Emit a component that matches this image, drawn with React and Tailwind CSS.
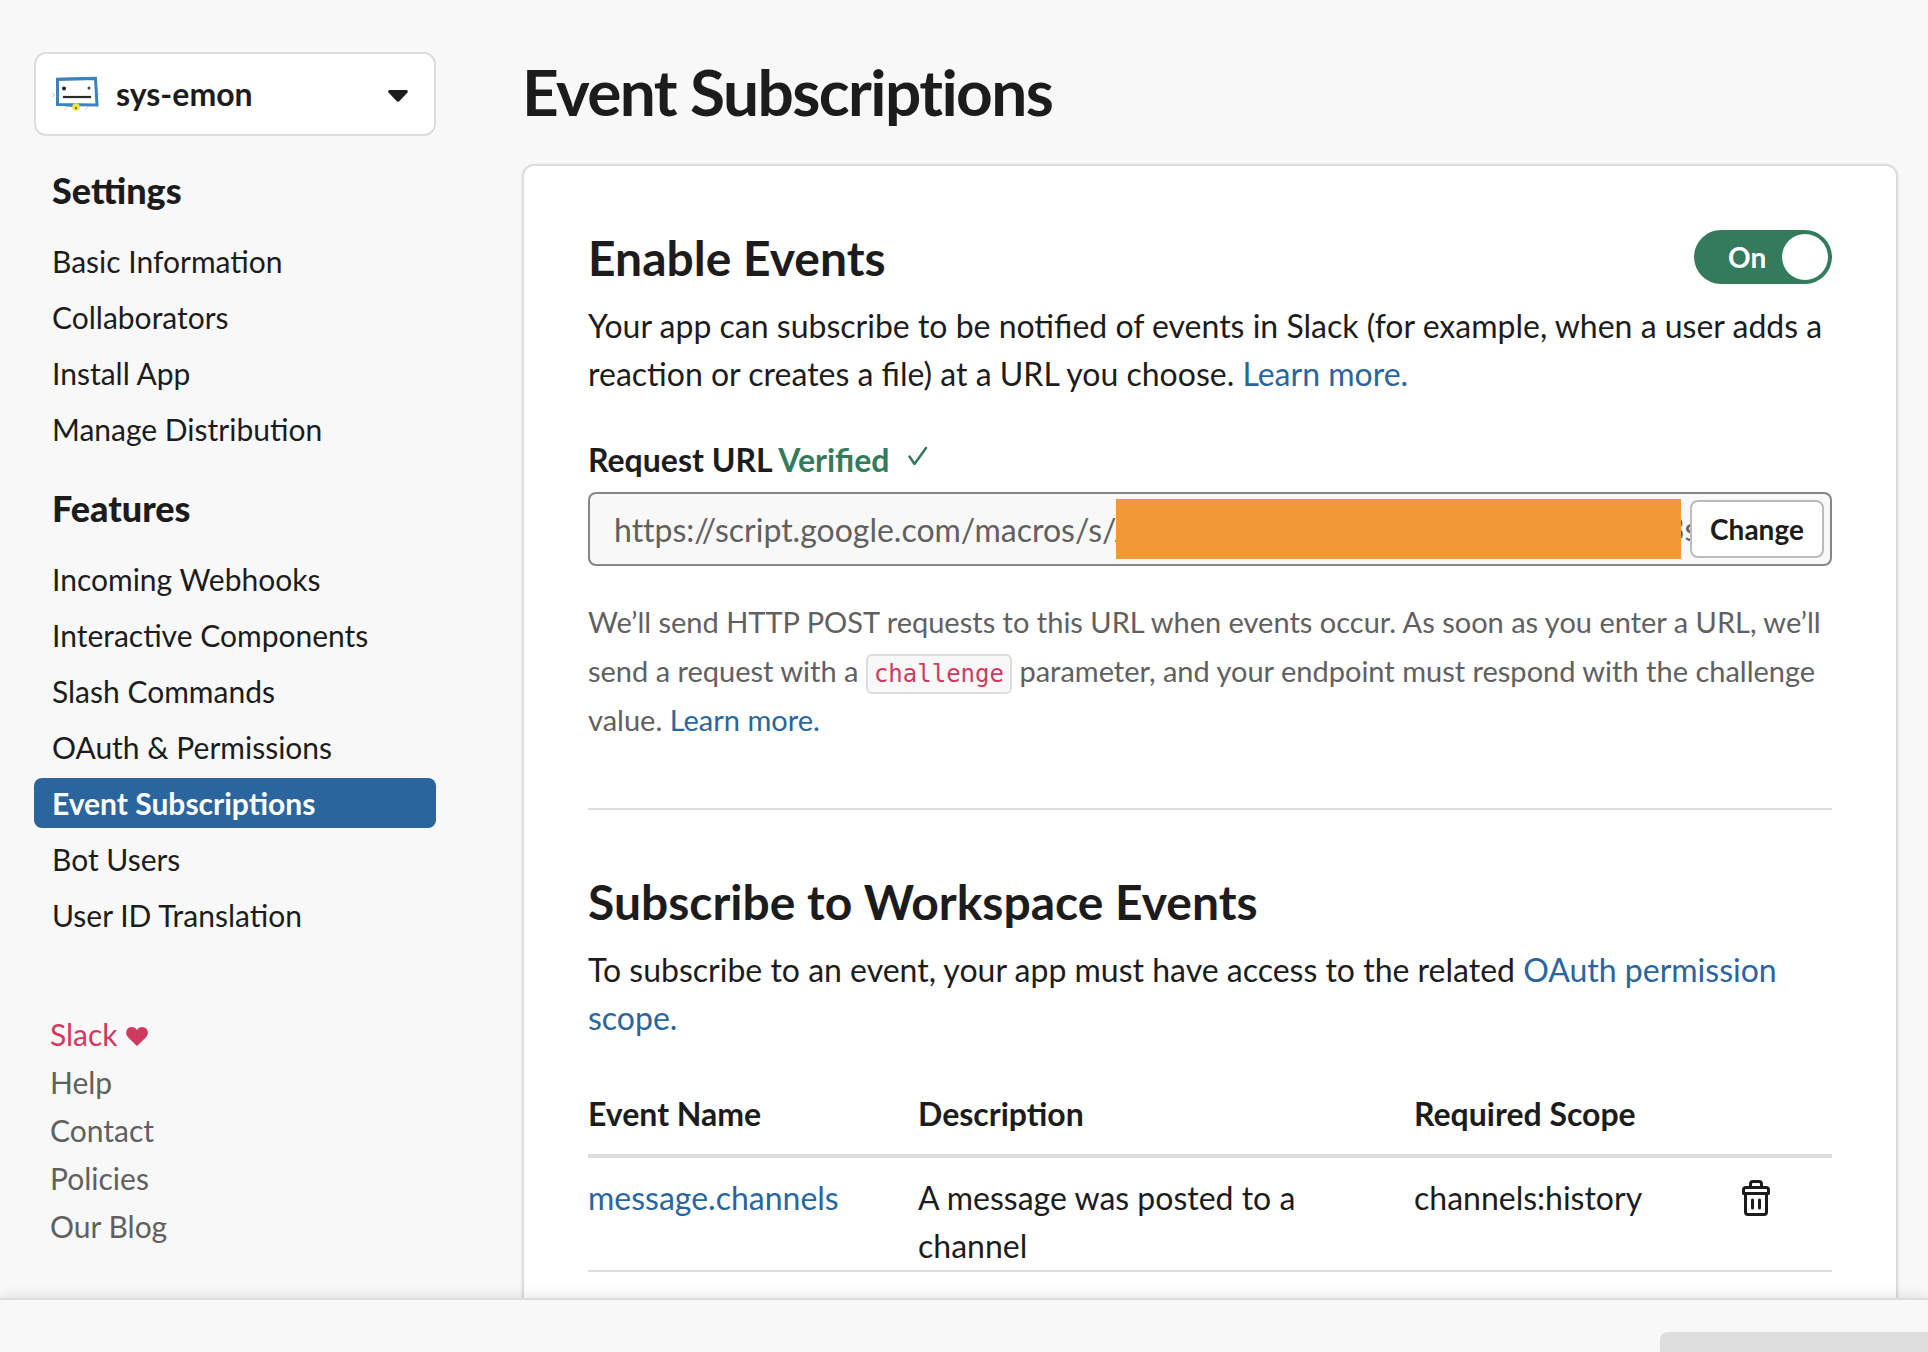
import React from 'react';

const settingsLinks = ['Basic Information', 'Collaborators', 'Install App', 'Manage Distribution'];

const featureLinks = [
  'Incoming Webhooks',
  'Interactive Components',
  'Slash Commands',
  'OAuth & Permissions',
  'Event Subscriptions',
  'Bot Users',
  'User ID Translation',
];

const footerLinks = ['Help', 'Contact', 'Policies', 'Our Blog'];

const events = [
  {
    name: 'message.channels',
    description: 'A message was posted to a channel',
    scope: 'channels:history',
  },
];

const AppIcon = () => (
  <svg className="w-12 h-9 shrink-0" viewBox="0 0 48 36" fill="none" aria-hidden="true">
    <path d="M0 17l3 2-3 2M48 18l-4 1M12 34l3-3M33 34l3-3" stroke="#d2cccc" strokeWidth="1" />
    <path d="M5.500 3.500L43.500 2.500L45 29L5.500 28.500Z" fill="#fff" stroke="#3a83c1" strokeWidth="3" />
    <path d="M4 2.500L44.500 1.500M4 28.500L24 30.500" stroke="#3a83c1" strokeWidth="1.500" />
    <circle cx="12" cy="12.500" r="1.900" fill="#1d1c1d" />
    <circle cx="37" cy="12" r="1.500" fill="#444" />
    <path d="M11 21H39" stroke="#2b2b2b" strokeWidth="2.200" />
    <circle cx="24" cy="31" r="3.800" fill="#f0e442" />
    <circle cx="24" cy="32" r="1.200" fill="#7a7420" />
  </svg>
);

const TrashIcon = () => (
  <svg className="w-7 h-9" viewBox="0 0 28 36" fill="none" stroke="#1d1c1d" strokeWidth="3" aria-hidden="true">
    <path d="M8.500 7V4Q8.500 1.500 11 1.500H17Q19.500 1.500 19.500 4V7" />
    <path d="M1.500 13.500V10Q1.500 7.500 4 7.500H24Q26.500 7.500 26.500 10V13.500Z" strokeLinejoin="round" />
    <path d="M3.500 14V32Q3.500 34.500 6 34.500H22Q24.500 34.500 24.500 32V14" />
    <path d="M10.500 20V28M17.500 20V28" strokeLinecap="round" />
  </svg>
);

const NavSection = ({ title, links, active }) => (
  <nav aria-label={title}>
    <h2 className="px-[18px] text-4xl leading-12 font-black">{title}</h2>
    <ul className="mt-[22px] space-y-1.5">
      {links.map((link) => (
        <li key={link}>
          <a
            href="#"
            className={
              link === active
                ? 'block rounded-lg bg-[#2a659e] px-[18px] text-[30px] leading-[50px] font-bold text-white'
                : 'block px-[18px] text-[30px] leading-[50px]'
            }
          >
            {link}
          </a>
        </li>
      ))}
    </ul>
  </nav>
);

const Sidebar = () => (
  <aside className="w-[402px] shrink-0 pt-[52px]">
    <button
      type="button"
      className="flex h-[84px] w-full items-center rounded-xl border-2 border-[#dddddd] bg-white pr-[26px] pl-4 text-left"
    >
      <AppIcon />
      <span className="ml-4 flex-1 text-[32px] font-bold">sys-emon</span>
      <svg className="mt-1 w-5 h-3" viewBox="0 0 20 12" fill="#1d1c1d" aria-hidden="true">
        <path d="M1.500 0H18.500Q20.500 .6 19.500 2.500L11.500 11Q10 12.500 8.500 11L.5 2.500Q-.5 .6 1.500 0Z" />
      </svg>
    </button>

    <div className="mt-[30px] space-y-[30px]">
      <NavSection title="Settings" links={settingsLinks} />
      <NavSection title="Features" links={featureLinks} active="Event Subscriptions" />
    </div>

    <ul className="mt-[70px] px-4 text-[30px] leading-12 text-[#616061]">
      <li>
        <a href="#" className="flex items-center text-[#d13a60]">
          Slack
          <svg className="mt-1 ml-2 w-[22px] h-[19px]" viewBox="0 0 22 19" fill="#d13a60" aria-hidden="true">
            <path d="M11 3.200C9 -1 2.500 -1 .6 3.400C-.4 6 .3 8.500 2.200 10.400L11 19L19.800 10.400C21.700 8.500 22.400 6 21.400 3.400C19.500 -1 13 -1 11 3.200Z" />
          </svg>
        </a>
      </li>
      {footerLinks.map((link) => (
        <li key={link}>
          <a href="#">{link}</a>
        </li>
      ))}
    </ul>
  </aside>
);

const RequestUrl = () => (
  <div className="mt-[38px]">
    <div className="flex items-center text-[32px] leading-12 font-bold">
      <label htmlFor="request-url">
        Request URL <span className="text-[#347a5c]">Verified</span>
      </label>
      <svg className="mb-2 ml-[18px] w-5 h-5" viewBox="0 0 20 20" fill="none" stroke="#347a5c" strokeWidth="2.500" strokeLinecap="round" strokeLinejoin="round" aria-hidden="true">
        <path d="M1.500 10.500L6.500 18L18 2" />
      </svg>
    </div>

    <div className="relative mt-2 flex h-[74px] items-center rounded-lg border-2 border-[#868686] bg-[#f8f8f8] pr-1.5 text-[32px] text-[#616061]">
      <input
        id="request-url"
        type="text"
        readOnly
        value="https://script.google.com/macros/s/A"
        className="h-full min-w-0 flex-1 bg-transparent pl-6 outline-none [font-variant-ligatures:none]"
      />
      <span className="w-6 overflow-hidden">3s</span>
      {/* covers the private part of the url */}
      <div className="absolute inset-y-[5px] left-[526px] right-[149px] bg-[#f19837]" />
      <button
        type="button"
        className="h-[58px] w-[134px] rounded-lg border-2 border-[#bbbbbb] bg-white text-[28px] font-bold text-[#1d1c1d]"
      >
        Change
      </button>
    </div>

    <p className="mt-[31px] text-[29px] leading-[49px] text-[#616061]">
      We’ll send HTTP POST requests to this URL when events occur. As soon as you enter a URL, we’ll send a request
      with a{' '}
      <code className="rounded-md border-2 border-[#dddddd] bg-[#f8f8f8] px-1.5 py-1 font-['DejaVu_Sans_Mono',monospace] text-2xl text-[#d13a60]">
        challenge
      </code>{' '}
      parameter, and your endpoint must respond with the challenge value.{' '}
      <a href="#" className="text-[#2a659e]">
        Learn more.
      </a>
    </p>
  </div>
);

const EventTable = () => (
  <table className="mt-11 w-full table-fixed text-left text-[32px] leading-12">
    <thead>
      <tr className="border-b-4 border-[#dddddd]">
        <th className="w-[330px] pt-1 pb-4 font-bold">Event Name</th>
        <th className="pt-1 pb-4 font-bold">Description</th>
        <th className="w-[328px] pt-1 pb-4 font-bold">Required Scope</th>
        <th className="w-[90px]">
          <span className="sr-only">Remove</span>
        </th>
      </tr>
    </thead>
    <tbody>
      {events.map((event) => (
        <tr key={event.name} className="border-b-2 border-[#dddddd] align-top">
          <td className="pt-4">
            <a href="#" className="text-[#2a659e]">
              {event.name}
            </a>
          </td>
          <td className="pt-4 pr-20">{event.description}</td>
          <td className="pt-4">{event.scope}</td>
          <td className="pt-[22px]">
            <button type="button" aria-label={`Remove ${event.name}`} className="block">
              <TrashIcon />
            </button>
          </td>
        </tr>
      ))}
    </tbody>
  </table>
);

const App = () => {
  return (
    <div className="flex h-screen flex-col overflow-hidden bg-[#f8f8f8] font-[Lato,sans-serif] text-[#1d1c1d]">
      <div className="flex min-h-0 flex-1 gap-[86px] overflow-hidden pr-[30px] pl-[34px]">
        <Sidebar />

        <main className="min-w-0 flex-1 pt-[52px]">
          <h1 className="text-[64px] leading-20 font-bold tracking-tight">Event Subscriptions</h1>

          <div className="mt-8 rounded-xl border-2 border-[#dddddd] bg-white px-16 pt-16 pb-16 shadow-sm">
            <section>
              <div className="flex items-start justify-between">
                <h2 className="text-5xl leading-14 font-bold">Enable Events</h2>
                <button
                  type="button"
                  role="switch"
                  aria-checked="true"
                  aria-label="Enable Events"
                  className="flex h-[54px] w-[138px] items-center justify-between rounded-full bg-[#347a5c] pr-1 pl-[34px] text-[28px] font-bold text-white"
                >
                  On
                  <span className="h-[46px] w-[46px] rounded-full bg-white" />
                </button>
              </div>
              <p className="mt-4 text-[32px] leading-12">
                Your app can subscribe to be notified of events in Slack (for example, when a user adds a reaction or
                creates a file) at a URL you choose.{' '}
                <a href="#" className="text-[#2a659e]">
                  Learn more.
                </a>
              </p>
              <RequestUrl />
            </section>

            <hr className="my-16 border-t-2 border-[#dddddd]" />

            <section>
              <h2 className="text-5xl leading-14 font-bold">Subscribe to Workspace Events</h2>
              <p className="mt-4 text-[32px] leading-12">
                To subscribe to an event, your app must have access to the related{' '}
                <a href="#" className="text-[#2a659e]">
                  OAuth permission scope.
                </a>
              </p>
              <EventTable />
            </section>
          </div>
        </main>
      </div>

      <footer className="z-10 flex h-[54px] shrink-0 justify-end border-t-2 border-[#dddddd] bg-[#f8f8f8] pt-8 shadow-[0_-2px_12px_rgba(0,0,0,0.1)]">
        <div className="h-20 w-[268px] rounded-tl-lg bg-[#dddddd]" />
      </footer>
    </div>
  );
};

export default App;
